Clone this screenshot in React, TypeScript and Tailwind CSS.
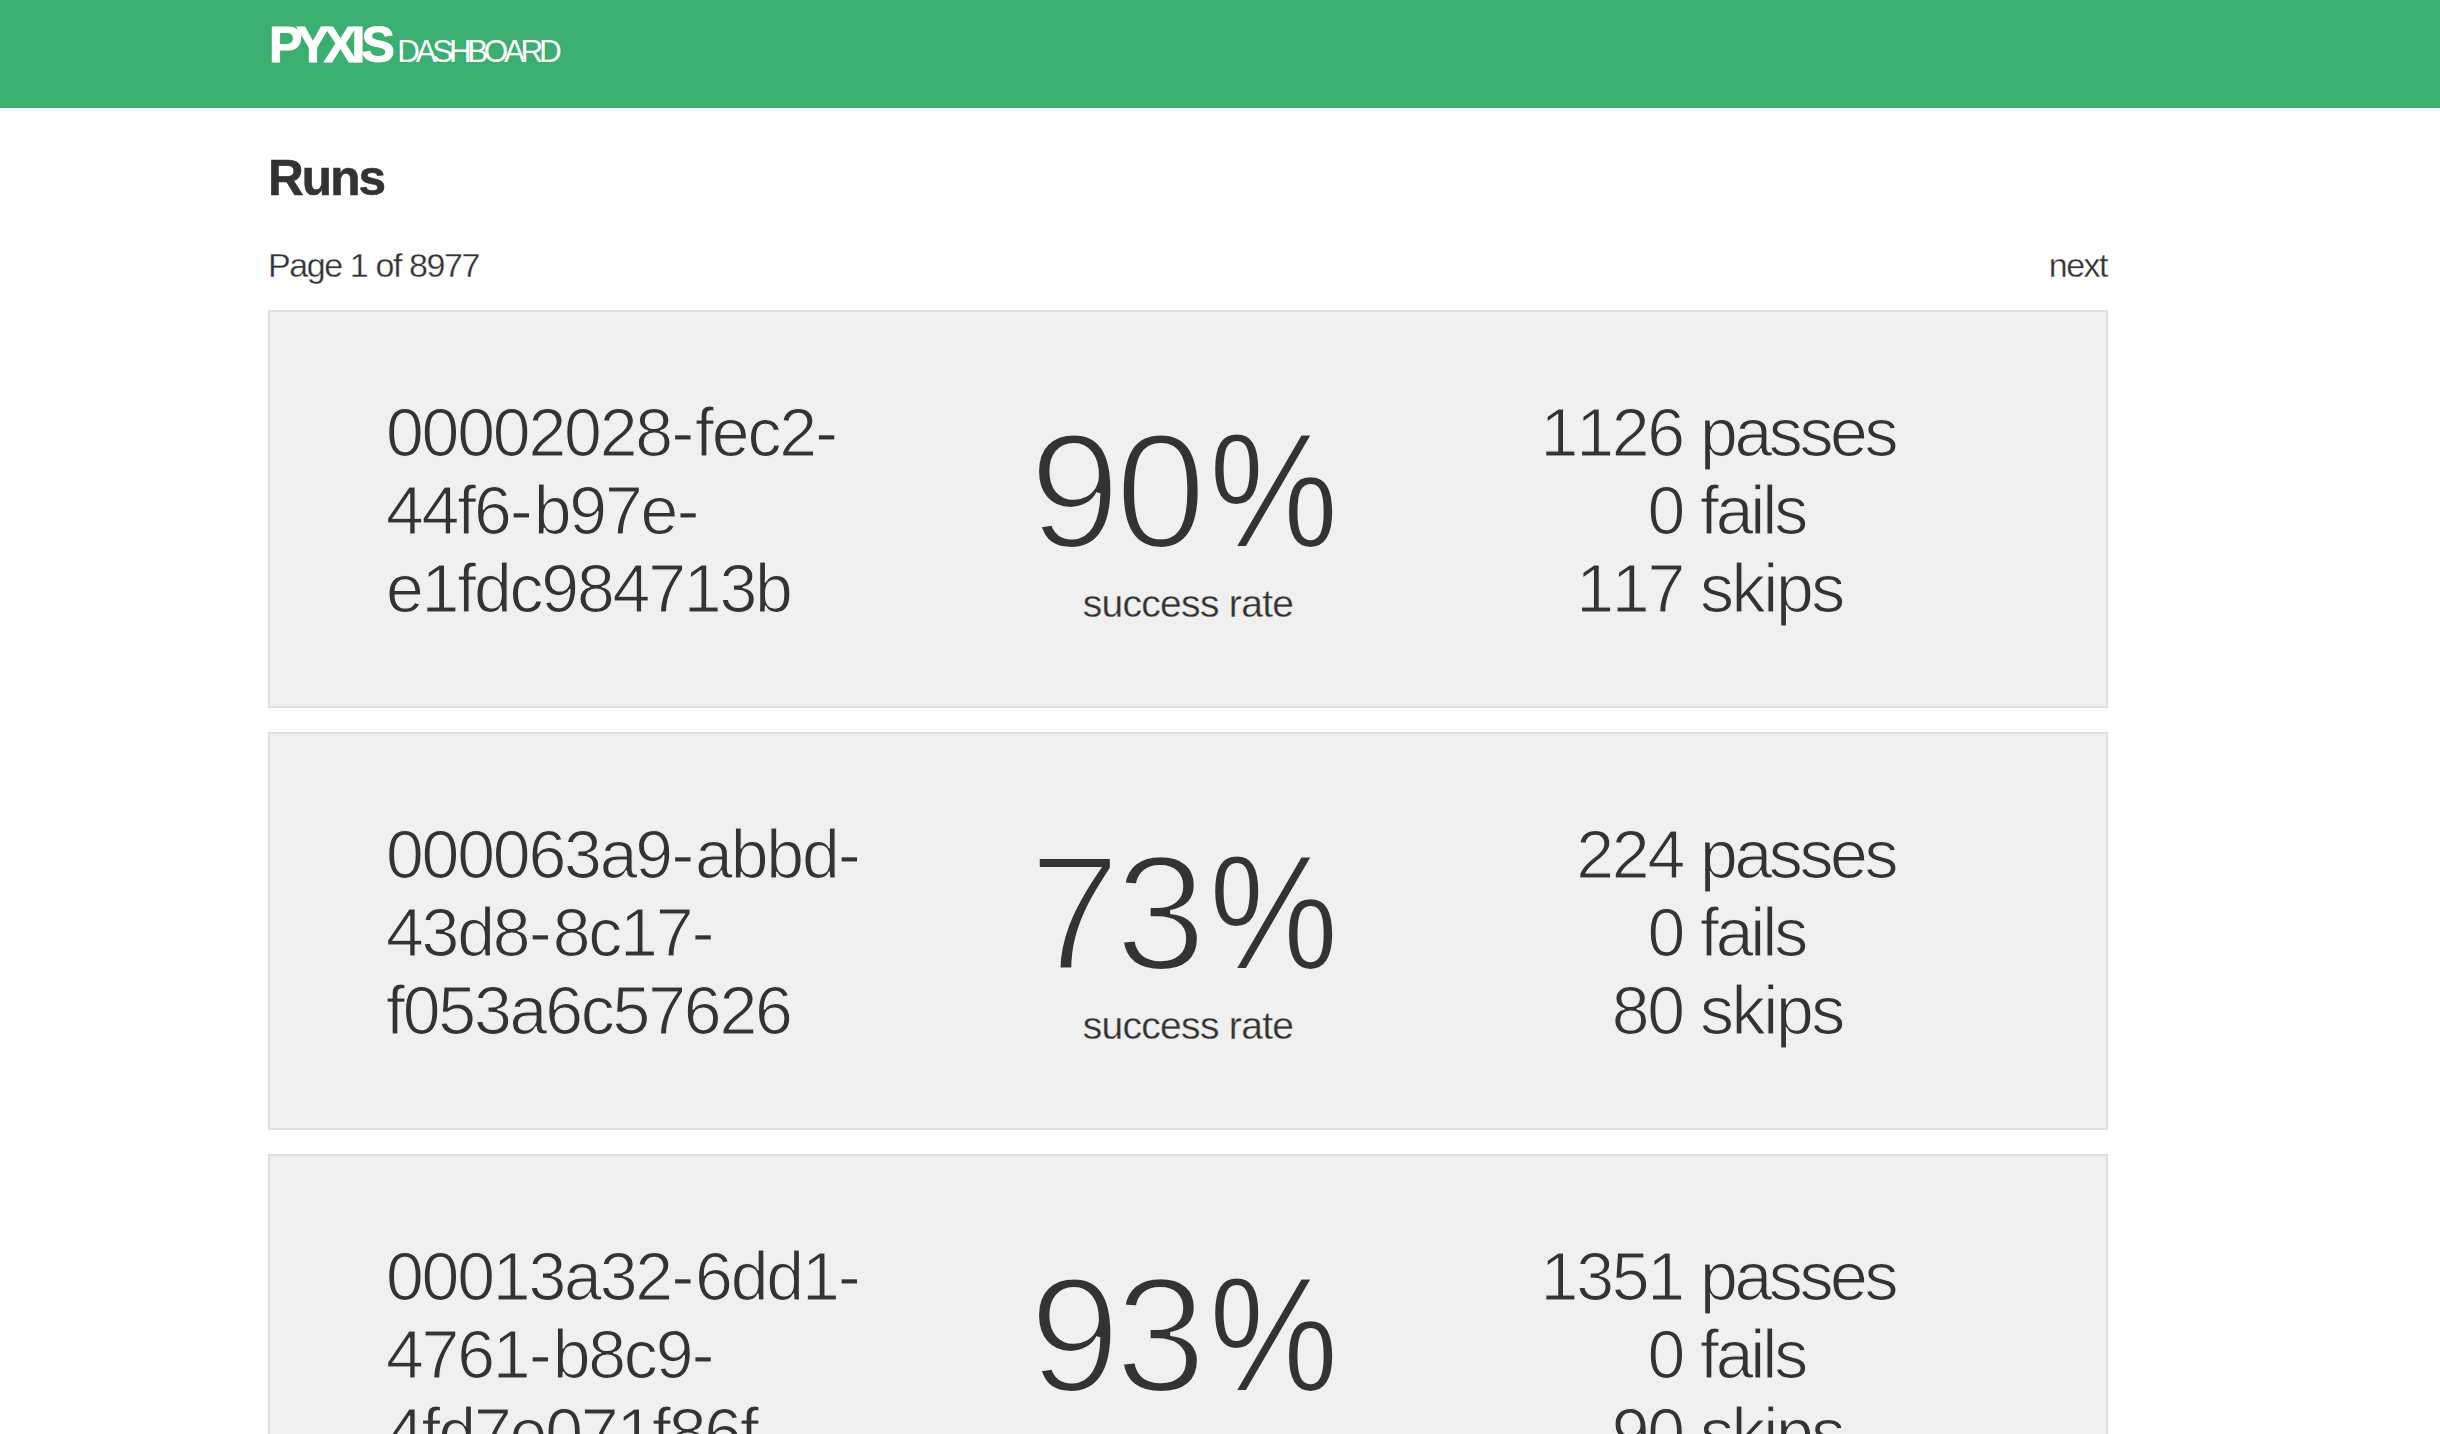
import React from "react";

type Run = { id: string[]; rate: number; passes: number; fails: number; skips: number };

const runs: Run[] = [
  { id: ["00002028-fec2-", "44f6-b97e-", "e1fdc984713b"], rate: 90, passes: 1126, fails: 0, skips: 117 },
  { id: ["000063a9-abbd-", "43d8-8c17-", "f053a6c57626"], rate: 73, passes: 224, fails: 0, skips: 80 },
  { id: ["00013a32-6dd1-", "4761-b8c9-", "4fd7e071f86f"], rate: 93, passes: 1351, fails: 0, skips: 90 },
];

function IdLine({ text }: { text: string }) {
  return (
    <div>
      {text.split(/(-)/).map((part, i) =>
        part === "-" ? (
          <span key={i} className="ml-[0.5px] mr-[3.2px]">-</span>
        ) : (
          <span key={i}>{part}</span>
        )
      )}
    </div>
  );
}

function RunCard({ run }: { run: Run }) {
  return (
    <article className="grid h-[398px] shrink-0 grid-cols-[500px_604px_1fr] border-2 border-[#dfdfdf] bg-[#f0f0f0] pl-[116px] pt-[81px] [font-kerning:none]">
      <div className="text-[68px] leading-[78px] tracking-[-2.2px] whitespace-nowrap [-webkit-text-stroke:1.2px_#f0f0f0]">
        {run.id.map((line) => (
          <IdLine key={line} text={line} />
        ))}
      </div>
      <div className="flex flex-col items-center">
        <div className="mr-[5px] pt-[3px] text-[163.5px] leading-[190px] tracking-[-5px] [-webkit-text-stroke:4.2px_#f0f0f0]">
          {run.rate}
          <span className="ml-[8px] mr-[-8px] inline-block origin-left scale-x-[0.89] [-webkit-text-stroke:2.2px_#f0f0f0]">%</span>
        </div>
        <div className="-mt-[11px] text-[39px] leading-[58px] tracking-[-0.7px] [-webkit-text-stroke:0.3px_#f0f0f0]">
          success rate
        </div>
      </div>
      <div className="grid auto-rows-[78px] grid-cols-[193px_1fr] gap-x-[17px] text-[68px] leading-[78px] [-webkit-text-stroke:1.2px_#f0f0f0]">
        <span className="text-right tracking-[-2.2px]">{run.passes}</span>
        <span className="tracking-[-3.4px]">passes</span>
        <span className="text-right tracking-[-2.2px]">{run.fails}</span>
        <span className="tracking-[-3.2px]">fails</span>
        <span className="text-right tracking-[-2.2px]">{run.skips}</span>
        <span className="tracking-[-2.4px]">skips</span>
      </div>
    </article>
  );
}

export default function App() {
  return (
    <div className="h-[1434px] overflow-hidden bg-white font-['Liberation_Sans',Arial,sans-serif] text-[#333333]">
      <header className="h-[108px] bg-[#3aaf70] pl-[269px] text-white">
        <div className="flex items-baseline pt-[13px] leading-[64px] [font-kerning:none]">
          <span className="text-[50px] font-bold tracking-[-6px] [-webkit-text-stroke:1px_#ffffff]">
            PYX<span className="ml-[0.5px] tracking-[-4px]">I</span>S
          </span>
          <span className="ml-[8.5px] text-[31.5px] tracking-[-4.4px]">DASHBOARD</span>
        </div>
      </header>
      <main className="ml-[268px] w-[1840px]">
        <h1 className="pt-[38px] text-[49.5px] font-bold leading-[64px] tracking-[-1.9px] [-webkit-text-stroke:0.6px_#333333]">Runs</h1>
        <div className="mt-[31px] flex justify-between text-[34px] leading-[48px] [-webkit-text-stroke:0.3px_#ffffff]">
          <span className="tracking-[-1.4px]">Page 1 of 8977</span>
          <span className="mr-[1px] tracking-[-1.5px]">next</span>
        </div>
        <section className="mt-[21px] flex flex-col gap-[24px]">
          {runs.map((run) => (
            <RunCard key={run.id[0]} run={run} />
          ))}
        </section>
      </main>
    </div>
  );
}
